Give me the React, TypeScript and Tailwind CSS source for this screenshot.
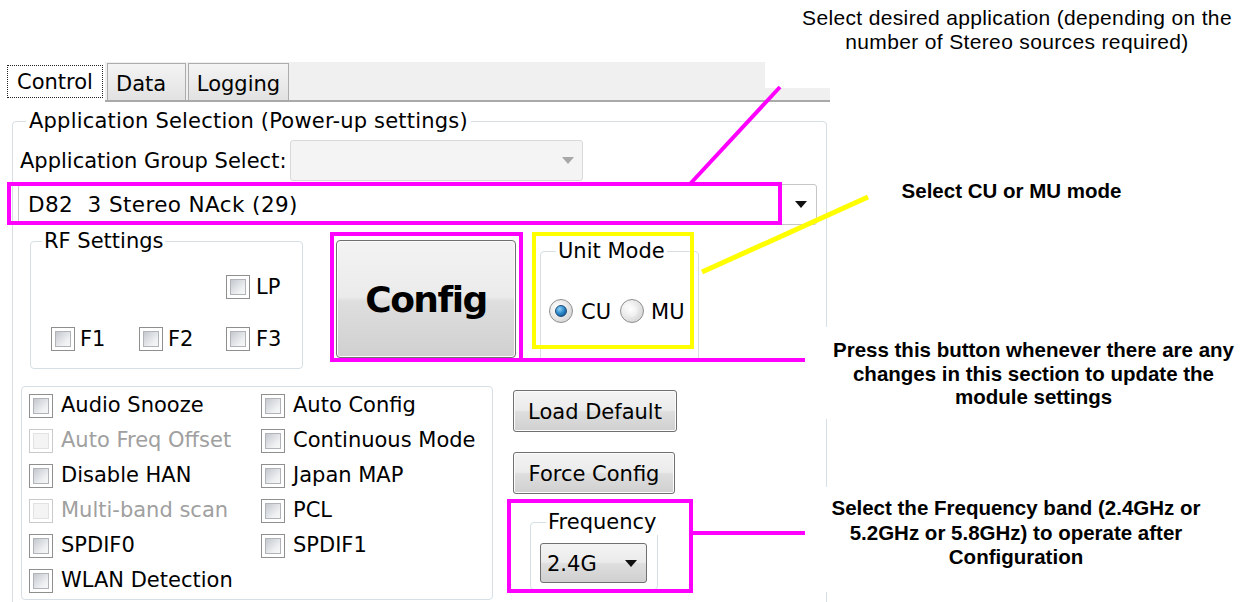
import React from "react";

function Arrow({ muted = false }: { muted?: boolean }) {
  return (
    <svg width="12" height="7" viewBox="0 0 12 7" className="shrink-0">
      <path d="M0 0H12L6 7Z" fill={muted ? "#a8a8a8" : "#111111"} />
    </svg>
  );
}

function Check({ disabled = false }: { disabled?: boolean }) {
  return (
    <span
      className={
        disabled
          ? "flex h-6 w-6 shrink-0 items-center justify-center border border-[#cacaca] bg-white"
          : "flex h-6 w-6 shrink-0 items-center justify-center border border-[#8e8f8f] bg-white"
      }
    >
      <span
        className={
          disabled
            ? "h-4 w-4 border border-[#e2e2e2] bg-[#f4f4f4]"
            : "h-4 w-4 border border-[#b0b4b9] bg-[linear-gradient(135deg,#c4c8ce,#eef0f2_70%,#f7f7f7)]"
        }
      />
    </span>
  );
}

function CheckItem({ label, disabled = false }: { label: string; disabled?: boolean }) {
  return (
    <div className="flex h-[35px] items-center gap-[8px] whitespace-nowrap">
      <Check disabled={disabled} />
      <span className={disabled ? "pt-[1px] text-[#a0a0a0]" : "pt-[1px] text-black"}>{label}</span>
    </div>
  );
}

function Radio({ checked = false }: { checked?: boolean }) {
  return (
    <span className="flex h-6 w-6 shrink-0 items-center justify-center rounded-full border border-[#8e8f8f] bg-[radial-gradient(circle_at_35%_35%,#ffffff,#e4e4e4_55%,#c8c8c8)]">
      {checked ? (
        <span className="h-[12px] w-[12px] rounded-full border border-[#1d4f7c] bg-[radial-gradient(circle_at_35%_30%,#8fd0f5,#2a86c8_50%,#0c3f6e)]" />
      ) : (
        <span className="h-[12px] w-[12px] rounded-full bg-[radial-gradient(circle_at_40%_35%,#ffffff,#e6e6e6)]" />
      )}
    </span>
  );
}

function Legend({ children, className }: { children: React.ReactNode; className: string }) {
  return <span className={className}>{children}</span>;
}

export default function App() {
  return (
    <div className="relative h-[602px] w-[1257px] overflow-hidden bg-white font-['DejaVu_Sans',sans-serif] text-[21px] text-black">
      {/* Application panel */}
      <div className="w-[830px] pt-[62px]">
        {/* Tab strip */}
        <div className="flex h-[40px] items-end border-b-2 border-[#a9a9a9] bg-[#f0f0f0]">
          <div className="relative z-10 -mb-[2px] h-[40px] w-[105px] bg-white pl-[7px] pt-[3px]">
            <div className="flex h-[33px] w-[96px] items-center justify-center border border-dotted border-[#222222] pt-[1px] leading-none">
              Control
            </div>
          </div>
          <div className="ml-[2px] flex h-[37px] w-[79px] items-center border border-b-0 border-[#acacac] bg-[linear-gradient(#f4f4f4,#e2e2e2)] pl-[8px] pt-[5px] leading-none">
            Data
          </div>
          <div className="ml-[2px] flex h-[37px] w-[101px] items-center justify-center border border-b-0 border-[#acacac] bg-[linear-gradient(#f4f4f4,#e2e2e2)] pt-[5px] leading-none">
            Logging
          </div>
        </div>

        {/* Tab page */}
        <div className="pl-[12px] pr-[3px] pt-[19px]">
          <div className="relative h-[520px] rounded-[4px] border border-[#d5dfe5]">
            <Legend className="absolute -top-[14px] left-[13px] whitespace-nowrap bg-white px-[3px] leading-[26px] tracking-[0.2px]">
              Application Selection (Power-up settings)
            </Legend>

            {/* Group select row */}
            <div className="flex items-center pl-[7px] pt-[18px]">
              <span className="w-[270px] whitespace-nowrap pt-[3px]">Application Group Select:</span>
              <div className="flex h-[41px] w-[293px] items-center justify-end rounded-[3px] border border-[#d9d9d9] bg-[#f4f4f4] pr-[8px]">
                <Arrow muted />
              </div>
            </div>

            {/* Application combo */}
            <div className="ml-[5px] mt-[3px] flex h-[41px] w-[799px] items-center justify-between rounded-[3px] border border-[#c6c6c6] bg-white px-[9px]">
              <span className="whitespace-pre pt-[2px] text-[21.5px] tracking-[0.4px]">D82  3 Stereo NAck (29)</span>
              <Arrow />
            </div>

            {/* RF settings, Config, Unit mode */}
            <div className="mt-[15px] flex items-start">
              <div className="relative ml-[17px] mt-[1px] h-[128px] w-[273px] rounded-[4px] border border-[#d5dfe5]">
                <Legend className="absolute -top-[14px] left-[11px] whitespace-nowrap bg-white px-[2px] leading-[26px]">
                  RF Settings
                </Legend>
                <div className="grid grid-cols-[88px_87px_auto] gap-y-[28px] pl-[20px] pt-[33px]">
                  <div className="col-start-3 flex h-6 items-center gap-[6px]">
                    <Check />
                    <span className="pt-[1px]">LP</span>
                  </div>
                  <div className="flex h-6 items-center gap-[5px]">
                    <Check />
                    <span className="pt-[1px]">F1</span>
                  </div>
                  <div className="flex h-6 items-center gap-[5px]">
                    <Check />
                    <span className="pt-[1px]">F2</span>
                  </div>
                  <div className="flex h-6 items-center gap-[6px]">
                    <Check />
                    <span className="pt-[1px]">F3</span>
                  </div>
                </div>
              </div>

              <button className="ml-[33px] flex h-[118px] w-[180px] items-center justify-center rounded-[4px] border border-[#707070] bg-[linear-gradient(to_bottom,#f3f3f3_0%,#ebebeb_48%,#dedede_52%,#d0d0d0_100%)] pt-[2px] text-[36px] font-bold tracking-[-1.5px] text-black shadow-[inset_0_0_0_1px_#fbfbfb]">
                Config
              </button>

              <div className="relative ml-[24px] mt-[11px] h-[111px] w-[159px] rounded-[4px] border border-[#d5dfe5]">
                <Legend className="absolute -top-[14px] left-[15px] whitespace-nowrap bg-white px-[2px] leading-[26px]">
                  Unit Mode
                </Legend>
                <div className="flex items-center pl-[8px] pt-[47px]">
                  <Radio checked />
                  <span className="ml-[8px] pt-[2px] leading-none">CU</span>
                  <span className="ml-[9px]">
                    <Radio />
                  </span>
                  <span className="ml-[7px] pt-[2px] leading-none">MU</span>
                </div>
              </div>
            </div>

            {/* Options and actions */}
            <div className="mt-[17px] flex items-start">
              <div className="ml-[8px] h-[214px] w-[472px] rounded-[4px] border border-[#d5dfe5] pl-[7px] pt-[1px]">
                <div className="grid grid-cols-[232px_auto]">
                  <CheckItem label="Audio Snooze" />
                  <CheckItem label="Auto Config" />
                  <CheckItem label="Auto Freq Offset" disabled />
                  <CheckItem label="Continuous Mode" />
                  <CheckItem label="Disable HAN" />
                  <CheckItem label="Japan MAP" />
                  <CheckItem label="Multi-band scan" disabled />
                  <CheckItem label="PCL" />
                  <CheckItem label="SPDIF0" />
                  <CheckItem label="SPDIF1" />
                  <CheckItem label="WLAN Detection" />
                </div>
              </div>

              <div className="ml-[20px] flex flex-col items-start">
                <button className="mt-[4px] flex h-[42px] w-[164px] items-center justify-center rounded-[3px] border border-[#707070] bg-[linear-gradient(to_bottom,#f3f3f3_0%,#ebebeb_48%,#dedede_52%,#d0d0d0_100%)] pt-[4px] text-black shadow-[inset_0_0_0_1px_#fbfbfb]">
                  Load Default
                </button>
                <button className="mt-[20px] flex h-[42px] w-[162px] items-center justify-center rounded-[3px] border border-[#707070] bg-[linear-gradient(to_bottom,#f3f3f3_0%,#ebebeb_48%,#dedede_52%,#d0d0d0_100%)] pt-[4px] text-black shadow-[inset_0_0_0_1px_#fbfbfb]">
                  Force Config
                </button>
                <div className="relative ml-[17px] mt-[28px] h-[68px] w-[128px] rounded-[4px] border border-[#d5dfe5] pl-[9px] pt-[20px]">
                  <Legend className="absolute -top-[14px] left-[15px] whitespace-nowrap bg-white px-[2px] leading-[26px]">
                    Frequency
                  </Legend>
                  <div className="flex h-[40px] w-[107px] items-center justify-between rounded-[3px] border border-[#707070] bg-[linear-gradient(to_bottom,#f3f3f3_0%,#ebebeb_48%,#dedede_52%,#d0d0d0_100%)] pl-[6px] pr-[9px]">
                    <span className="pt-[4px]">2.4G</span>
                    <Arrow />
                  </div>
                </div>
              </div>
            </div>
          </div>
        </div>
      </div>

      {/* Callout notes */}
      <div className="absolute left-[765px] top-0 h-[88px] w-[492px] bg-white" />
      <p className="absolute left-[787px] top-[6px] w-[460px] whitespace-nowrap text-center font-['Liberation_Sans',Arial,sans-serif] text-[21px] leading-[24px] tracking-[0.35px] text-black">
        Select desired application (depending on the
        <br />
        number of Stereo sources required)
      </p>

      <p className="absolute left-[861px] top-[179px] w-[301px] whitespace-nowrap text-center font-['Liberation_Sans',Arial,sans-serif] text-[20.5px] font-bold leading-[24px] text-black">
        Select CU or MU mode
      </p>

      <div className="absolute left-[810px] top-[327px] h-[92px] w-[447px] bg-white" />
      <p className="absolute left-[818px] top-[338px] w-[431px] whitespace-nowrap text-center font-['Liberation_Sans',Arial,sans-serif] text-[20.5px] font-bold leading-[23.5px] text-black">
        Press this button whenever there are any
        <br />
        changes in this section to update the
        <br />
        module settings
      </p>

      <div className="absolute left-[810px] top-[487px] h-[105px] w-[447px] bg-white" />
      <p className="absolute left-[816px] top-[496px] w-[400px] whitespace-nowrap text-center font-['Liberation_Sans',Arial,sans-serif] text-[20.5px] font-bold leading-[24.5px] text-black">
        Select the Frequency band (2.4GHz or
        <br />
        5.2GHz or 5.8GHz) to operate after
        <br />
        Configuration
      </p>

      {/* Callout frames and leader lines */}
      <svg className="pointer-events-none absolute left-0 top-0" width="1257" height="602" viewBox="0 0 1257 602">
        <g fill="none" stroke="#ff00ff" strokeWidth="4">
          <rect x="9" y="184" width="771" height="39" />
          <line x1="690" y1="184" x2="780" y2="87" />
          <rect x="332" y="234" width="189" height="126" />
          <line x1="521" y1="360" x2="805" y2="360" />
          <rect x="509" y="501" width="182" height="90" />
          <line x1="691" y1="533" x2="805" y2="533" />
        </g>
        <g fill="none" stroke="#ffff00">
          <rect x="534" y="234" width="158" height="113" strokeWidth="4" />
          <line x1="702" y1="272" x2="868" y2="197" strokeWidth="5" />
        </g>
      </svg>
    </div>
  );
}
